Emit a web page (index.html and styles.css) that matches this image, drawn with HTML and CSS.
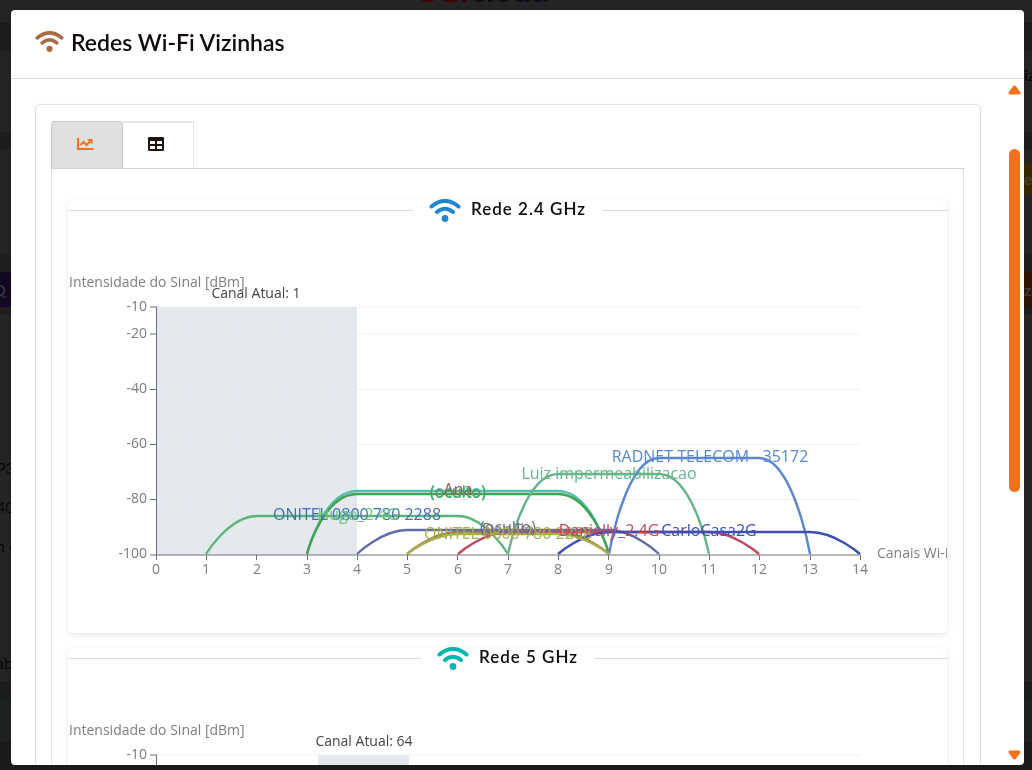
FILE: index.html
```html
<!DOCTYPE html>
<html lang="pt-BR">
<head>
  <meta charset="UTF-8" />
  <title>Redes Wi-Fi Vizinhas</title>
  <link rel="stylesheet" href="styles.css">
</head>
<body>

  <!-- símbolos reutilizados -->
  <svg class="simbolos" aria-hidden="true">
    <symbol id="wifi" viewBox="0 0 32 24">
      <path d="M2.500 7.500Q16-3.500 29.500 7.500M8 13Q16 6.500 24 13" fill="none" stroke="currentColor" stroke-width="4" stroke-linecap="round" />
      <circle cx="16" cy="19.500" r="3.400" fill="currentColor" />
    </symbol>
  </svg>

  <div class="pagina" aria-hidden="true">
    <div class="topo"><span class="marca"><b>OLT</b>cloud</span></div>
    <div class="faixa"></div>
    <div class="linha alta"><span></span><span>iz</span></div>
    <div class="faixa estreita"></div>
    <div class="linha aviso"><span></span><span class="amarelo">e</span></div>
    <div class="linha botoes"><span class="roxo">Q</span><span class="laranja">za</span></div>
    <div class="linha media"></div>
    <div class="linha"></div>
    <div class="linha"></div>
    <div class="linha"><span>P3</span></div>
    <div class="linha"><span>40</span></div>
    <div class="linha"><span>n 4</span></div>
    <div class="linha"></div>
    <div class="linha"></div>
    <div class="linha"><span>ab</span></div>
    <div class="faixa estreita"></div>
    <div class="linha rodape"></div>
  </div>

  <div class="modal" role="dialog" aria-labelledby="titulo">
    <header class="modal-header">
      <svg class="icone-titulo"><use href="#wifi" /></svg>
      <h1 id="titulo">Redes Wi-Fi Vizinhas</h1>
    </header>

    <div class="modal-corpo">
      <div class="conteudo">
        <div class="painel">
          <div class="abas" role="tablist">
            <button class="aba ativa" role="tab" aria-selected="true" aria-label="Gráfico">
              <svg width="18" height="14" viewBox="0 0 18 14">
                <path d="M2 1V12H17.500" fill="none" stroke="currentColor" stroke-width="2" />
                <path d="M4.500 8L7.500 5L10.500 8L14 4.500" fill="none" stroke="currentColor" stroke-width="2" />
                <path d="M11 2H16.500V7.500Z" fill="currentColor" />
              </svg>
            </button>
            <button class="aba" role="tab" aria-selected="false" aria-label="Tabela">
              <svg width="18" height="14" viewBox="0 0 18 14">
                <path fill="currentColor" fill-rule="evenodd" d="M2 0H16Q17 0 17 1V13Q17 14 16 14H2Q1 14 1 13V1Q1 0 2 0ZM3 4V7H8V4ZM10 4V7H15V4ZM3 9V12H8V9ZM10 9V12H15V9Z" />
              </svg>
            </button>
          </div>

          <div class="aba-conteudo">
            <section class="card">
              <h2 class="divisor azul"><svg><use href="#wifi" /></svg><span>Rede 2.4 GHz</span></h2>
              <svg class="grafico" viewBox="0 0 879 412">
                <rect class="canal" x="89" y="86" width="200" height="248" />
                <g class="grade">
                  <path d="M89 86H792M89 113H792M89 168.500H792M89 223.500H792M89 278.500H792" />
                </g>
                <g class="eixo">
                  <path d="M88.500 85.500V334H792" />
                  <path d="M82 86H88M82 113H88M82 168.500H88M82 223.500H88M82 278.500H88M82 334H88" />
                  <path d="M88.500 334V339M138.500 334V339M188.500 334V339M239.500 334V339M289.500 334V339M339.500 334V339M389.500 334V339M440.500 334V339M490.500 334V339M540.500 334V339M591.500 334V339M641.500 334V339M691.500 334V339M742.500 334V339M792.500 334V339" />
                </g>
                <g class="rotulo-y">
                  <text x="79" y="90">-10</text>
                  <text x="79" y="117">-20</text>
                  <text x="79" y="172">-40</text>
                  <text x="79" y="227">-60</text>
                  <text x="79" y="282">-80</text>
                  <text x="79" y="337">-100</text>
                </g>
                <g class="rotulo-x">
                  <text x="88" y="353">0</text>
                  <text x="138" y="353">1</text>
                  <text x="189" y="353">2</text>
                  <text x="239" y="353">3</text>
                  <text x="289" y="353">4</text>
                  <text x="339" y="353">5</text>
                  <text x="390" y="353">6</text>
                  <text x="440" y="353">7</text>
                  <text x="490" y="353">8</text>
                  <text x="541" y="353">9</text>
                  <text x="591" y="353">10</text>
                  <text x="641" y="353">11</text>
                  <text x="691" y="353">12</text>
                  <text x="742" y="353">13</text>
                  <text x="792" y="353">14</text>
                </g>
                <text class="nome-eixo" x="1" y="66">Intensidade do Sinal [dBm]</text>
                <text class="nome-eixo" x="809" y="337">Canais Wi-Fi</text>
                <text class="canal-atual" x="188" y="77">Canal Atual: 1</text>

                <!-- curvas: sobe em um canal, patamar, desce em um canal -->
                <g class="curvas">
                  <path stroke="#5cb578" d="M138 333C138 333 161 295 189 295H390C417 295 440 333 440 333" />
                  <path stroke="#53bfb3" d="M239 333C239 333 255 270 289 270H490C524 270 541 333 541 333" />
                  <path stroke="#46a04d" d="M239 333C239 333 255 273 289 273H490C524 273 541 333 541 333" />
                  <path stroke="#68b58c" d="M440 333C440 333 456 253 490 253H591C625 253 641 333 641 333" />
                  <path stroke="#5b87cc" d="M541 333C541 333 557 237 591 237H691C725 237 742 333 742 333" />
                  <path stroke="#606da6" d="M289 333C289 333 314 309 339 309H541C566 309 591 333 591 333" />
                  <path stroke="#a8704a" d="M339 333C339 333 364 311 390 311H490C516 311 541 333 541 333" />
                  <path stroke="#bd4a62" d="M390 333C390 333 415 311 440 311H641C666 311 691 333 691 333" />
                  <path stroke="#3e4eb3" d="M490 333C490 333 515 311 541 311H742C767 311 792 333 792 333" />
                  <path stroke="#a5b050" d="M339 333C339 333 364 313 390 313H490C516 313 541 333 541 333" />
                </g>
                <g class="redes">
                  <text x="289" y="299" fill="#456db8">ONITEL 0800 780 2288</text>
                  <text x="290" y="299" fill="#6cc67c">Hugo_2.4G</text>
                  <text x="390" y="276" fill="#48bdb2">(oculto)</text>
                  <text x="390" y="274" fill="#a0524a">Ana</text>
                  <text x="390" y="277" fill="#46a04d">(oculto)</text>
                  <text x="541" y="258" fill="#68b58c">Luiz impermeabilizacao</text>
                  <text x="642" y="241" fill="#5b87cc">RADNET TELECOM - 35172</text>
                  <text x="440" y="314" fill="#a07058">Danillo</text>
                  <text x="440" y="312" fill="#606da6">(oculto)</text>
                  <text x="440" y="318" fill="#a5b050">ONITEL 0800 780 2288</text>
                  <text x="541" y="315" fill="#bd4a62">Danielly_2.4G</text>
                  <text x="641" y="315" fill="#3e4eb3">CarloCasa2G</text>
                </g>
              </svg>
            </section>

            <section class="card">
              <h2 class="divisor verde"><svg><use href="#wifi" /></svg><span>Rede 5 GHz</span></h2>
              <svg class="grafico" viewBox="0 0 879 412">
                <rect class="canal" x="250" y="86" width="91" height="248" />
                <g class="grade"><path d="M89 86H792" /></g>
                <g class="eixo"><path d="M88.500 85.500V334H792M82 86H88" /></g>
                <g class="rotulo-y"><text x="79" y="90">-10</text></g>
                <text class="nome-eixo" x="1" y="66">Intensidade do Sinal [dBm]</text>
                <text class="canal-atual" x="296" y="77">Canal Atual: 64</text>
              </svg>
            </section>
          </div>
        </div>
      </div>

      <div class="rolagem" aria-hidden="true">
        <svg width="13" height="10" viewBox="0 0 13 10"><path d="M6.500 2L11 8H2Z" /></svg>
        <div class="trilho"><div class="polegar"></div></div>
        <svg width="13" height="10" viewBox="0 0 13 10"><path d="M2 2H11L6.500 8Z" /></svg>
      </div>
    </div>
  </div>

</body>
</html>
```

FILE: styles.css
```css
* {
  box-sizing: border-box;
}
body {
  margin: 0;
  height: 100vh;
  overflow: hidden;
  background: #1a1a1a;
  color: #120a0a;
  font-family: Lato, sans-serif;
}
.simbolos {
  display: none;
}

/* página escurecida atrás do modal */
.pagina {
  color: #080808;
  font-size: 16px;
}
.topo {
  height: 23px;
  background: #242424;
  text-align: center;
  overflow: hidden;
}
.marca {
  display: block;
  margin-top: -28px;
  padding-right: 68px;
  color: #0c0c18;
  font-size: 32px;
  line-height: 36px;
  font-weight: 900;
}
.marca b {
  color: #3a0008;
}
.faixa {
  height: 28px;
  background: #1c1c1c;
}
.faixa.estreita {
  height: 17px;
}
.linha {
  display: flex;
  justify-content: space-between;
  align-items: center;
  height: 39px;
  background: #242424;
  border-bottom: 1px solid #202020;
}
.linha.alta {
  height: 81px;
  align-items: flex-start;
  padding-top: 14px;
}
.linha.aviso {
  height: 106px;
  align-items: flex-start;
  padding-top: 15px;
}
.linha.botoes {
  height: 60px;
  align-items: flex-start;
  padding-top: 17px;
  background: #1e1e1e;
}
.linha.media {
  height: 55px;
}
.linha.rodape {
  height: 42px;
  background: #1e2121;
}
.linha span {
  width: 11px;
  overflow: hidden;
  white-space: nowrap;
  text-indent: -4px;
}
.linha span:last-child:not(:first-child) {
  width: 8px;
  text-indent: 0;
}
.linha .amarelo,
.linha .roxo,
.linha .laranja {
  height: 35px;
  line-height: 35px;
  font-weight: bold;
  background: #332800;
  color: #44402c;
}
.linha .amarelo {
  height: 30px;
  line-height: 30px;
}
.linha .roxo {
  background: #120822;
  color: #36323c;
  text-indent: -7px;
}
.linha .laranja {
  background: #2c1604;
  color: #443830;
}

.modal {
  position: fixed;
  inset: 10px 8px 5px 11px;
  display: flex;
  flex-direction: column;
  background: #fff;
  border-radius: 4px;
  overflow: hidden;
}
.modal-header {
  display: flex;
  align-items: center;
  gap: 7px;
  flex: none;
  height: 69px;
  padding: 0 24px 4px;
  border-bottom: 1px solid #dbdbdc;
}
.icone-titulo {
  width: 29px;
  height: 22px;
  color: #a76a42;
}
h1 {
  margin: 0;
  font-size: 23px;
  line-height: 28px;
  font-weight: 600;
}
.modal-corpo {
  display: flex;
  flex: 1;
  min-height: 0;
}
.conteudo {
  flex: 1;
  min-width: 0;
  padding: 25px 24px 0;
  overflow: hidden;
}
.painel {
  padding: 16px 16px 40px 15px;
  border: 1px solid #e3e4e5;
  border-radius: 4px;
  box-shadow: 0 1px 2px rgba(34, 36, 38, 0.1);
}
.abas {
  display: flex;
  height: 48px;
  border-bottom: 1px solid #d0d0d2;
}
.aba {
  display: flex;
  align-items: center;
  justify-content: center;
  width: 71px;
  padding: 0 5px 3px 0;
  background: #fff;
  border: 1px solid #e4e4e5;
  border-top-width: 2px;
  border-bottom: none;
  border-left: none;
  color: #1e1212;
}
.aba.ativa {
  width: 72px;
  background: #dfe0e2;
  border: 1px solid #c9cacc;
  border-bottom: none;
  border-radius: 4px 4px 0 0;
  color: #f2711c;
}
.aba-conteudo {
  padding: 31px 16px 16px;
  border: 1px solid #e4e4e5;
  border-top: none;
}
.card {
  margin-bottom: 15px;
  border-radius: 5px;
  box-shadow: 0 2px 6px rgba(0, 0, 0, 0.1);
}
.divisor {
  display: flex;
  align-items: center;
  height: 21px;
  margin: 0;
  font-size: 17px;
  line-height: 20px;
  font-weight: 600;
  letter-spacing: 1px;
}
.divisor::before,
.divisor::after {
  content: "";
  flex: 1;
  height: 1px;
  background: #dbdbdc;
}
.divisor svg {
  width: 32px;
  height: 24px;
  margin: 0 10px 0 16px;
}
.divisor span {
  margin-right: 16px;
  padding-bottom: 4px;
}
.azul svg {
  color: #2185d0;
}
.verde svg {
  color: #00b5ad;
}

.grafico {
  display: block;
  width: 100%;
  font-family: "Open Sans", "Noto Sans", sans-serif;
  font-size: 14px;
}
.canal {
  fill: #e5e8ed;
}
.grade path {
  stroke: #e6eaf3;
  stroke-dasharray: 2 1;
}
.eixo path {
  fill: none;
  stroke: #6e7079;
}
.rotulo-y {
  fill: #7c7e86;
  text-anchor: end;
}
.rotulo-x {
  fill: #7c7e86;
  text-anchor: middle;
}
.nome-eixo {
  fill: #7c7e86;
}
.canal-atual {
  fill: #444;
  text-anchor: middle;
}
.curvas path {
  fill: none;
  stroke-width: 2.4;
}
.redes {
  font-size: 16px;
  text-anchor: middle;
}

.rolagem {
  display: flex;
  flex-direction: column;
  align-items: center;
  width: 19px;
  padding: 6px 0 5px;
}
.rolagem path {
  fill: #f2711c;
  stroke: #f2711c;
  stroke-width: 3;
  stroke-linejoin: round;
}
.trilho {
  flex: 1;
  padding-top: 54px;
}
.polegar {
  width: 11px;
  height: 57%;
  background: #f2711c;
  border-radius: 6px;
}
```
